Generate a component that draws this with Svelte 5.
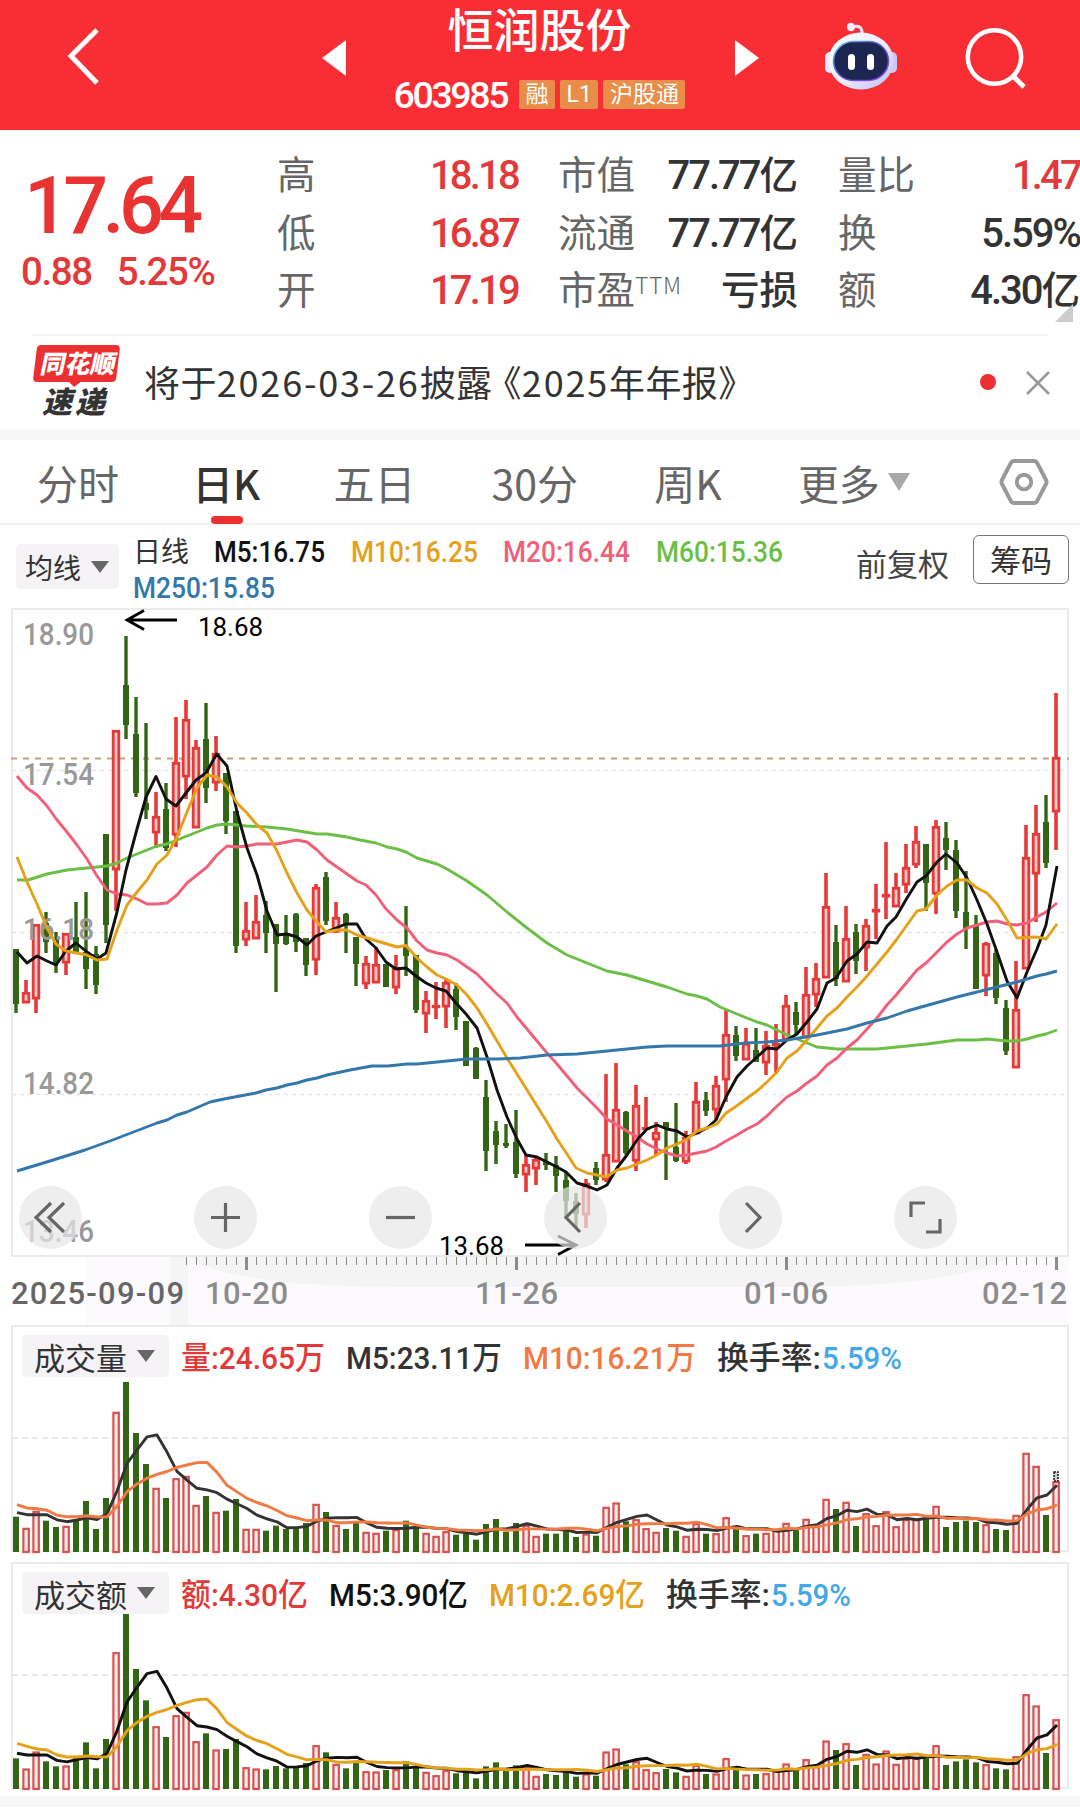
<script>
  const quoteCols = [
    [
      { label: '高', value: '18.18', tone: 'up' },
      { label: '低', value: '16.87', tone: 'up' },
      { label: '开', value: '17.19', tone: 'up' }
    ],
    [
      { label: '市值', value: '77.77', unit: '亿' },
      { label: '流通', value: '77.77', unit: '亿' },
      { label: '市盈', sup: 'TTM', unit: '亏损' }
    ],
    [
      { label: '量比', value: '1.47', tone: 'up' },
      { label: '换', value: '5.59%' },
      { label: '额', value: '4.30', unit: '亿' }
    ]
  ]

  const tabs = ['分时', '日K', '五日', '30分', '周K']
  const activeTab = '日K'

  const averages = [
    { text: 'M5:16.75', color: '#111111', width: 111 },
    { text: 'M10:16.25', color: '#e5a11a', width: 127 },
    { text: 'M20:16.44', color: '#f0607a', width: 127 },
    { text: 'M60:15.36', color: '#6bbf45', width: 127 },
    { text: 'M250:15.85', color: '#3478ab', width: 142 }
  ]

  const priceLabels = [
    { text: '18.90', y: 645 },
    { text: '17.54', y: 785 },
    { text: '16.18', y: 940 },
    { text: '14.82', y: 1094 },
    { text: '13.46', y: 1242 }
  ]

  const dates = [
    { text: '2025-09-09', x: 11, width: 173, color: '#666666' },
    { text: '10-20', x: 205, width: 83, color: '#8c8c8c' },
    { text: '11-26', x: 475, width: 83, color: '#8c8c8c' },
    { text: '01-06', x: 744, width: 84, color: '#8c8c8c' },
    { text: '02-12', x: 982, width: 85, color: '#8c8c8c' }
  ]

  const xAt = (i) => 16 + i * 10

  // direction, high, body top, body bottom, low
  const candles = `
g949,949,1004,1013 r980,992,1003,1003 r924,924,999,1013 g912,923,942,953 g932,940,963,973
r933,933,963,975 g902,937,952,952 g892,952,969,989 g946,954,985,994 g834,834,925,943
r730,730,870,911 g636,685,725,739 g697,734,793,797 g723,803,810,819 r792,816,833,848
g783,809,848,851 r717,762,835,847 r700,719,777,799 r740,747,828,828 g703,739,788,803
r736,753,783,791 g773,773,821,834 g811,811,946,953 r902,930,940,946 r895,921,939,939
g901,915,933,953 g924,924,944,992 g915,934,944,945 g913,914,942,952 g938,938,965,976
r884,887,960,975 g872,877,921,925 r902,917,932,933 g913,914,924,953 g937,937,964,986
r956,963,984,989 r947,964,983,983 g964,964,987,987 r955,967,988,994 g906,947,956,976
g955,955,1010,1013 r991,1000,1014,1033 r982,1005,1007,1019 r978,982,1007,1028 g983,989,1017,1030
g1021,1021,1066,1066 g1047,1048,1079,1079 g1080,1097,1151,1171 g1121,1131,1145,1164 g1124,1143,1146,1148
g1110,1142,1174,1178 r1155,1164,1175,1192 r1157,1159,1169,1185 g1153,1161,1165,1170 g1156,1165,1176,1192
g1172,1180,1201,1217 g1193,1201,1214,1228 r1179,1183,1215,1228 g1162,1168,1180,1185 r1074,1154,1180,1182
r1063,1109,1162,1162 g1111,1112,1153,1155 r1085,1105,1161,1171 r1097,1127,1129,1129 r1122,1132,1140,1156
g1122,1122,1129,1180 g1103,1147,1161,1162 r1131,1137,1162,1164 r1082,1101,1134,1134 g1092,1100,1111,1116
r1076,1085,1110,1120 r1010,1034,1080,1102 g1026,1035,1056,1061 r1028,1043,1060,1060 g1028,1050,1062,1062
r1031,1045,1063,1075 r1024,1043,1046,1074 r995,1005,1040,1040 g1002,1012,1025,1035 r967,994,1038,1038
r963,978,995,1007 r873,906,978,978 g925,942,979,986 r906,938,982,982 g924,932,961,974
r919,925,948,971 r884,909,912,939 r842,894,897,919 r873,887,907,907 r844,867,885,893
r826,841,865,868 g844,844,883,911 r820,826,894,914 g822,838,850,870 g840,850,911,918
g871,912,929,949 g915,926,989,989 r942,943,976,996 g949,953,998,1004 g1000,1008,1051,1055
r961,1009,1068,1068 r825,857,969,969 r805,833,874,922 g795,822,863,868 r693,757,812,850`
    .trim()
    .split(/\s+/)
    .map((row, i) => {
      const [high, top, bottom, low] = row.slice(1).split(',').map(Number)
      return { x: xAt(i), up: row[0] === 'r', high, top, bottom, low }
    })

  const priceLines = [
    {
      color: '#6bbf45',
      points:
        '17,880 28,880 47,874 67,870 87,868 107,866 117,863 127,858 157,846 167,844 187,836 207,828 217,825 227,824 247,826 267,827 287,829 317,834 327,834 347,837 360,840 376,843 387,847 397,849 406,852 417,858 427,861 437,864 447,869 467,881 487,895 507,912 527,928 547,943 567,955 587,963 607,971 627,975 647,981 667,987 687,994 697,996 707,999 720,1007 737,1014 757,1022 767,1025 787,1035 807,1043 817,1047 837,1049 877,1049 907,1046 917,1045 927,1044 957,1040 977,1040 987,1039 1007,1041 1017,1041 1027,1039 1037,1036 1046,1034 1057,1030'
    },
    {
      color: '#f0607a',
      points:
        '17,776 27,788 37,795 47,806 57,820 67,832 77,845 87,859 97,876 107,890 117,894 127,895 137,899 147,904 157,904 167,903 177,895 187,883 197,875 207,867 217,855 227,846 237,847 247,846 257,844 267,844 277,844 287,842 297,840 307,842 317,850 327,860 337,867 347,874 357,881 366,885 376,895 386,909 397,920 407,928 417,941 427,950 437,953 447,955 457,960 467,967 477,974 487,984 497,994 507,1003 517,1017 527,1029 537,1041 547,1053 557,1064 567,1076 577,1088 587,1098 597,1108 607,1119 617,1125 627,1131 637,1137 647,1144 657,1149 667,1153 677,1156 687,1155 697,1153 707,1151 716,1147 726,1141 737,1135 747,1129 757,1124 767,1116 777,1106 787,1097 797,1091 807,1083 817,1076 827,1065 837,1058 847,1048 857,1040 867,1029 877,1018 887,1005 897,994 907,982 917,970 926,963 937,952 947,942 957,934 967,928 977,925 987,922 997,921 1007,924 1017,925 1027,923 1037,917 1046,912 1057,903'
    },
    {
      color: '#111111',
      points:
        '17,952 27,963 37,956 47,961 56,965 66,951 76,943 87,952 97,959 106,953 117,912 126,870 137,829 146,797 156,776.5 166,799 176,806 186,793 196,780 206,773 216.7,754 227,766 237,812 247,848 257,875 267,911 277,935 287,934 297,937 307,945 316,936 326,932 336,928 346,924 357,924 366,939 376,948 386,962 396,969 406,968 416,976 426,983 436,988 446,991 456,1003 466,1014 477,1028 487,1057 497,1090 507,1117 517,1139 526,1155 537,1157 547,1162 557,1167 566,1172 577,1183 587,1186 597,1190 607,1185 617,1168 627,1155 637,1140 647,1129 657,1125 667,1129 677,1131 687,1137 697,1133 707,1128 716,1120 726,1097 737,1077 747,1066 757,1057 767,1048 777,1049 787,1040 797,1034 807,1022 817,1009 827,983 836,978 847,961 857,954 867,942 877,943 887,926 896,917 907,898 917,882 926,876 937,862 946,854 957,863 967,878 977,900 987,924 997,952 1007,981 1017,998 1027,972 1037,949 1046,925 1057,866'
    },
    {
      color: '#e5a11a',
      points:
        '17,857 27,882 37,904 47,928 56,944 66,951 76,953 87,955 97,960 107,959 117,930 127,905 137,892 147,880 157,864 167,855 177,837 187,812 197,788 207,775 217,777 227,787 237,803 247,813 257,825 267,833 277,851 287,873 297,893 307,910 317,922 326,932 337,930 347,930 357,935 367,938 377,941 387,944 397,947 406,945.5 417,958 427,967 437,975 446,979 457,985 467,995 477,1008 487,1024 497,1041 507,1058 517,1074 527,1090 537,1106 547,1122 557,1139 567,1154 576,1168 587,1173 597,1175 606,1177 617,1170 627,1168 637,1164 647,1160 657,1155 667,1148 677,1144 687,1139 697,1131 707,1128 717,1124 726,1113 735,1107 746,1099 757,1091 767,1082 777,1072 787,1058 797,1051 807,1040 817,1028 827,1016 837,1008 847,997 857,987 867,976 877,964 887,952 897,939 907,925 917,911 926,909 937,895 947,886 957,880 967,880 977,888 987,893 997,904 1007,920 1017,938 1027,937.5 1037,937 1046,939 1057,924'
    },
    {
      color: '#3478ab',
      points:
        '17,1171 50,1161 85,1150 110,1141 157,1123 167,1120 177,1115 187,1112 210,1102 224,1099 240,1096 256,1093 266,1090 277,1088 287,1085 297,1083 307,1080 317,1078 327,1075 350,1070 372,1066 388,1066 407,1064 417,1064 447,1061 467,1059 497,1059 520,1058 547,1055 577,1054 607,1051 647,1047 667,1046 720,1046 745,1043 767,1042 787,1040 817,1035 847,1029 867,1023 887,1018 907,1011 957,997 977,992 997,987 1017,982 1037,976 1046,974 1057,971'
    }
  ]

  // bar heights in thirds of a pixel
  const volume = [
    106, 71, 122, 94, 75, 77, 97, 153, 69, 162, 419, 510, 357, 264, 191, 162, 220, 227, 140, 168, 119, 124, 159, 68, 68,
    64, 79, 69, 71, 87, 143, 120, 80, 69, 92, 59, 56, 64, 67, 94, 75, 56, 47, 61, 52, 55, 37, 84, 99, 61, 87, 80, 47, 55,
    55, 75, 45, 54, 49, 134, 147, 92, 97, 70, 59, 72, 64, 47, 85, 55, 55, 103, 71, 49, 55, 56, 65, 86, 69, 98, 77, 158,
    129, 149, 78, 115, 79, 121, 76, 97, 97, 99, 137, 75, 90, 94, 90, 82, 69, 66, 110, 296, 257, 111, 211
  ]
  const amount = [
    92, 60, 111, 83, 68, 69, 97, 140, 62, 150, 409, 529, 360, 266, 187, 156, 220, 230, 142, 167, 117, 120, 150, 64, 60,
    59, 69, 62, 67, 78, 130, 110, 74, 62, 84, 52, 51, 57, 58, 83, 67, 50, 40, 56, 47, 52, 32, 68, 80, 55, 71, 64, 38, 45,
    42, 57, 37, 45, 40, 111, 120, 74, 82, 58, 49, 60, 50, 38, 71, 45, 45, 91, 60, 42, 45, 46, 55, 75, 57, 88, 67, 144,
    117, 136, 72, 104, 75, 114, 74, 92, 92, 92, 130, 72, 83, 89, 80, 73, 62, 59, 97, 283, 249, 108, 208
  ]

  function movingAverage(values, span, lead) {
    return values.map((_, i) => {
      if (i < span - 1) return lead[i]
      return values.slice(i - span + 1, i + 1).reduce((a, b) => a + b, 0) / span
    })
  }

  function toPoints(values) {
    return values.map((v, i) => `${xAt(i) + 1},${(226 - v / 3).toFixed(1)}`).join(' ')
  }

  const panels = [
    {
      name: '成交量',
      bars: volume,
      stats: [
        { text: '量:24.65万', color: '#e23a3a', width: 144 },
        { text: 'M5:23.11万', color: '#333333', width: 156 },
        { text: 'M10:16.21万', color: '#f07a42', width: 173 }
      ],
      slow: toPoints(movingAverage(volume, 10, [139, 129, 127, 122, 107, 103, 103, 106, 102])),
      fast: toPoints(movingAverage(volume, 5, [115, 109, 109, 109])),
      slowColor: '#f07a42',
      fastColor: '#333333',
      forecast: true
    },
    {
      name: '成交额',
      bars: amount,
      stats: [
        { text: '额:4.30亿', color: '#e23a3a', width: 127 },
        { text: 'M5:3.90亿', color: '#111111', width: 139 },
        { text: 'M10:2.69亿', color: '#e5a11a', width: 156 }
      ],
      slow: toPoints(movingAverage(amount, 10, [134, 125, 117, 114, 99, 93, 93, 96, 94])),
      fast: toPoints(movingAverage(amount, 5, [104, 99, 99, 99])),
      slowColor: '#e5a11a',
      fastColor: '#111111',
      forecast: false
    }
  ]

  const minorTicks = Array.from({ length: 88 }, (_, i) => 186 + i * 10)
  const majorTicks = [246, 516, 786, 1056]

  const controls = [
    'M45 17 30 31.5 45 46M32 17 17 31.5 32 46',
    'M17 31.5H46M31.5 17V46',
    'M17 31.5H46',
    'M36 17 22 31.5 36 46',
    'M27 17 41 31.5 27 46',
    'M17 31V17H31M46 33V46H32'
  ]
</script>

{#snippet fitted(text, color, width, size)}
  <svg class="fitted" {width} height="36">
    <text x="0" y="28" fill={color} font-size={size} textLength={width} lengthAdjust="spacingAndGlyphs">{text}</text>
  </svg>
{/snippet}

<div class="screen">
  <header class="topbar">
    <svg class="back" width="40" height="64" viewBox="0 0 40 64">
      <path d="M34 6 8 32 34 59" fill="none" stroke="#fff" stroke-width="5" />
    </svg>
    <svg class="prev" width="24" height="36" viewBox="0 0 24 36"><path d="M24 0V36L0 18Z" fill="#fff" /></svg>
    <div class="stock">
      <h1>恒润股份</h1>
      <div class="stock-meta">
        <span class="code">603985</span>
        <span class="tag">融</span>
        <span class="tag">L1</span>
        <span class="tag">沪股通</span>
      </div>
    </div>
    <svg class="next" width="24" height="36" viewBox="0 0 24 36"><path d="M0 0V36L24 18Z" fill="#fff" /></svg>
    <svg class="robot" width="72" height="68" viewBox="0 0 72 68">
      <defs>
        <linearGradient id="shell" x1="0" y1="0" x2="1" y2="1">
          <stop offset="0" stop-color="#ffffff" />
          <stop offset="0.55" stop-color="#efeaff" />
          <stop offset="1" stop-color="#b9bdf0" />
        </linearGradient>
        <linearGradient id="rim" x1="0" y1="0" x2="1" y2="1">
          <stop offset="0" stop-color="#5fd8f0" />
          <stop offset="0.5" stop-color="#4a4fd0" />
          <stop offset="1" stop-color="#a04be8" />
        </linearGradient>
      </defs>
      <path d="M27 5Q38 2 37 13" fill="none" stroke="#f1e9fb" stroke-width="3" />
      <circle cx="26" cy="5" r="4.2" fill="#f4eefc" />
      <rect x="0" y="30" width="11" height="21" rx="5" fill="#ece8fb" />
      <rect x="61" y="30" width="11" height="21" rx="5" fill="#c9c8f4" />
      <ellipse cx="36" cy="39" rx="32.5" ry="28.5" fill="url(#shell)" />
      <rect x="8.5" y="19.5" width="55" height="39" rx="20" fill="#1c2650" stroke="url(#rim)" stroke-width="1.6" />
      <rect x="23" y="32" width="7" height="16" rx="3.5" fill="#fff" />
      <rect x="42" y="32" width="7" height="16" rx="3.5" fill="#fff" />
    </svg>
    <svg class="search" width="64" height="64" viewBox="0 0 64 64">
      <circle cx="31.5" cy="31" r="26.7" fill="none" stroke="#fff" stroke-width="4.5" />
      <path d="M49 49 61 61" stroke="#fff" stroke-width="5" />
    </svg>
  </header>

  <section class="quote">
    <div class="last">
      <div class="price">17.64</div>
      <div class="change"><span>0.88</span><span>5.25%</span></div>
    </div>
    {#each quoteCols as col}
      <dl class="col">
        {#each col as item}
          <div class="pair">
            <dt>{item.label}{#if item.sup}<sup>{item.sup}</sup>{/if}</dt>
            <dd class={item.tone}>
              {#if item.value}<span class="num">{item.value}</span>{/if}{#if item.unit}<span>{item.unit}</span>{/if}
            </dd>
          </div>
        {/each}
      </dl>
    {/each}
    <i class="corner"></i>
  </section>

  <section class="news">
    <div class="badge">
      <span class="badge-top"><b>同花顺</b></span>
      <span class="badge-bottom">速递</span>
    </div>
    <p>将于<span class="digits">2026-03-26</span>披露<span class="bracket">《</span><span class="digits">2025</span>年年报》</p>
    <i class="dot"></i>
    <svg width="24" height="24" viewBox="0 0 24 24">
      <path d="M1 1 23 23M23 1 1 23" stroke="#999" stroke-width="2.6" />
    </svg>
  </section>

  <nav class="tabs">
    {#each tabs as tab}
      <span class="tab" class:active={tab === activeTab}>{tab}</span>
    {/each}
    <span class="tab more">更多<i class="caret"></i></span>
    <svg class="settings" width="50" height="48" viewBox="0 0 50 48">
      <path
        d="M14.5 3H35.5Q37 3 38 4.7L47 22Q48 24 47 26L38 43.3Q37 45 35.5 45H14.5Q13 45 12 43.3L3 26Q2 24 3 22L12 4.7Q13 3 14.5 3Z"
        fill="none"
        stroke="#999"
        stroke-width="4"
      />
      <circle cx="25" cy="24" r="7.2" fill="none" stroke="#999" stroke-width="4" />
    </svg>
  </nav>

  <section class="legend">
    <span class="picker">均线<i class="caret"></i></span>
    <div class="averages">
      <span class="period">日线</span>
      {#each averages as avg}
        {@render fitted(avg.text, avg.color, avg.width, 29.5)}
      {/each}
    </div>
    <span class="adjust">前复权</span>
    <span class="chips">筹码</span>
  </section>

  <section class="kline">
    <svg class="chart" width="1080" height="649" viewBox="0 608 1080 649">
      <rect x="12" y="609" width="1056" height="647" fill="none" stroke="#ebebeb" stroke-width="2" />
      {#each [770.5, 932.5, 1094.5] as y}
        <line x1="12" x2="1068" y1={y} y2={y} stroke="#e6e6e6" stroke-width="1.5" stroke-dasharray="4 4" />
      {/each}
      <line x1="11" x2="1069" y1="758.5" y2="758.5" stroke="#bda677" stroke-width="2" stroke-dasharray="6 6" />

      {#each candles as c}
        {#if c.up}
          <path d="M{c.x} {c.high}V{c.top}M{c.x} {c.bottom}V{c.low}" stroke="#e53a38" stroke-width="3.6" />
          <rect
            x={c.x - 2.8}
            y={c.top + 1.3}
            width="5.6"
            height={Math.max(c.bottom - c.top - 2.2, 0.5)}
            fill="#f7c9c9"
            stroke="#e53a38"
            stroke-width="2.8"
          />
        {:else}
          <line x1={c.x} x2={c.x} y1={c.high} y2={c.low} stroke="#336614" stroke-width="3.4" />
          <rect x={c.x - 3} y={c.top} width="6" height={c.bottom - c.top} fill="#336614" />
        {/if}
      {/each}

      {#each priceLabels as label}
        <text x="23" y={label.y} class="axis" textLength="71" lengthAdjust="spacingAndGlyphs">{label.text}</text>
      {/each}

      {#each priceLines as line}
        <polyline points={line.points} fill="none" stroke={line.color} stroke-width="2.9" stroke-linejoin="round" />
      {/each}

      <path d="M177 620H128M144 610.5 127 620 144 629.5" fill="none" stroke="#000" stroke-width="2.8" />
      <text x="198" y="636" class="mark" textLength="65" lengthAdjust="spacingAndGlyphs">18.68</text>
      <path d="M525 1245H575M558 1236 576 1245 558 1254.5" fill="none" stroke="#000" stroke-width="2.8" />
      <text x="439" y="1255" class="mark" textLength="65" lengthAdjust="spacingAndGlyphs">13.68</text>
    </svg>
    <div class="controls">
      {#each controls as d}
        <span class="control">
          <svg width="63" height="63" viewBox="0 0 63 63"><path {d} fill="none" stroke="#666" stroke-width="3.2" /></svg>
        </span>
      {/each}
    </div>
  </section>

  <svg class="timeline" width="1080" height="68" viewBox="0 1257 1080 68">
    <rect x="86" y="1257" width="983" height="70" fill="#fdfafd" />
    <path d="M188 1257H1010Q960 1287 780 1287H400Q230 1287 188 1257Z" fill="#f5f4f5" />
    <rect x="170" y="1257" width="18" height="70" fill="#f5f5f6" />
    {#each minorTicks as x}
      <line x1={x + 0.5} x2={x + 0.5} y1="1257" y2="1265" stroke="#8c8c8c" stroke-width="1" />
    {/each}
    {#each majorTicks as x}
      <line x1={x + 0.5} x2={x + 0.5} y1="1257" y2="1270" stroke="#8c8c8c" stroke-width="3" />
    {/each}
    {#each dates as date}
      <text x={date.x} y="1304" class="date" fill={date.color} textLength={date.width}>{date.text}</text>
    {/each}
  </svg>

  {#each panels as panel}
    <section class="panel">
      <svg class="chart" width="1080" height="228" viewBox="0 0 1080 228">
        <rect x="12" y="1" width="1056" height="225" fill="none" stroke="#ebebeb" stroke-width="2" />
        <line x1="12" x2="1068" y1="113" y2="113" stroke="#e2e2e2" stroke-width="1.5" stroke-dasharray="6 4" />
        {#each panel.bars as v, i}
          {#if candles[i].up}
            <rect
              x={xAt(i) - 2.6}
              y={227.5 - v / 3}
              width="5.4"
              height={v / 3 - 0.5}
              fill="#fdecec"
              stroke="#d9514f"
              stroke-width="2.2"
            />
          {:else}
            <rect x={xAt(i) - 3} y={227 - v / 3} width="6" height={v / 3} fill="#336614" />
          {/if}
        {/each}
        {#if panel.forecast}
          <rect x="1054" y="147" width="4" height="9" fill="#ccc" stroke="#222" stroke-width="1.6" stroke-dasharray="2 1" />
        {/if}
        <polyline points={panel.fast} fill="none" stroke={panel.fastColor} stroke-width="2.9" stroke-linejoin="round" />
        <polyline points={panel.slow} fill="none" stroke={panel.slowColor} stroke-width="2.9" stroke-linejoin="round" />
      </svg>
      <div class="panel-head">
        <span class="picker">{panel.name}<i class="caret"></i></span>
        {#each panel.stats as stat}
          {@render fitted(stat.text, stat.color, stat.width, 32)}
        {/each}
        <span class="turnover">
          {@render fitted('换手率:', '#333333', 104, 32)}
          {@render fitted('5.59%', '#45a8e6', 80, 32)}
        </span>
      </div>
    </section>
  {/each}

  <div class="strip"></div>
</div>

<style>
  :global(body) {
    margin: 0;
    background: #fff;
  }

  .screen {
    width: 1080px;
    height: 1812px;
    overflow: hidden;
    background: #fff;
    color: #333;
    font-family: Roboto, 'Noto Sans CJK SC', sans-serif;
  }

  svg {
    display: block;
    flex: none;
  }

  .topbar {
    display: grid;
    grid-template-columns: 60px 262px 413px 90px 138px 117px;
    height: 130px;
    background: #f92e34;
    color: #fff;
  }

  .back {
    grid-column: 2;
    grid-row: 1;
    margin: 24px 0 0 3px;
  }

  .prev {
    grid-column: 3;
    grid-row: 1;
    margin-top: 40px;
  }

  .stock {
    grid-column: 3;
    grid-row: 1;
    display: flex;
    flex-direction: column;
    align-items: center;
    padding-left: 22px;
  }

  h1 {
    margin: 1px 0 0;
    font-size: 46px;
    font-weight: 500;
    line-height: 60px;
  }

  .stock-meta {
    display: flex;
    align-items: center;
    gap: 5px;
    margin-top: 16px;
    height: 35px;
  }

  .code {
    margin-right: 7px;
    font-size: 37.5px;
    font-weight: 500;
    letter-spacing: -2.4px;
  }

  .tag {
    padding: 0 6.5px;
    border-radius: 2px;
    background: #e88d4a;
    font-size: 23px;
    line-height: 29px;
  }

  .next {
    grid-column: 4;
    grid-row: 1;
    margin-top: 40px;
  }

  .robot {
    grid-column: 5;
    grid-row: 1;
    margin-top: 22px;
  }

  .search {
    grid-column: 6;
    grid-row: 1;
    margin-top: 26px;
  }

  .quote {
    position: relative;
    display: grid;
    grid-template-columns: 237px 241px 240px 242px;
    column-gap: 40px;
    height: 204px;
  }

  .last {
    color: #e93232;
    font-weight: 500;
  }

  .price {
    margin: 35px 0 0 24px;
    font-size: 79px;
    line-height: 82px;
    letter-spacing: -5.6px;
  }

  .change {
    display: flex;
    gap: 25px;
    margin: 3px 0 0 21px;
    color: #e23a3a;
    font-size: 38.5px;
    line-height: 44px;
    letter-spacing: -1.4px;
  }

  .col {
    margin: 17px 0 0;
  }

  .pair {
    display: flex;
    justify-content: space-between;
    height: 57.5px;
    line-height: 57px;
    font-size: 38.5px;
  }

  dt {
    color: #666;
    white-space: nowrap;
  }

  sup {
    font-family: 'Noto Sans CJK SC', sans-serif;
    font-size: 23px;
    font-weight: 300;
    line-height: 0;
    letter-spacing: 0.5px;
    vertical-align: 10px;
  }

  dd {
    margin: 0;
    white-space: nowrap;
    font-weight: 500;
  }

  dd .num {
    font-size: 40px;
    letter-spacing: -2px;
  }

  dd.up {
    color: #e23a3a;
  }

  dd.up .num {
    letter-spacing: -2.8px;
  }

  .corner {
    position: absolute;
    right: 7px;
    bottom: 12px;
    border-bottom: 18px solid #ccc;
    border-left: 18px solid transparent;
  }

  .news {
    display: flex;
    align-items: center;
    margin: 0 32px;
    height: 93px;
    border-top: 2px solid #f3f3f3;
  }

  .badge {
    width: 89px;
    height: 75px;
    font-style: italic;
    font-weight: 900;
  }

  .badge-top {
    position: relative;
    display: block;
    margin: 0 3px;
    height: 37px;
    border-radius: 4px;
    background: #ec2f31;
    color: #fff;
    font-size: 25px;
    line-height: 39px;
    text-align: center;
    transform: skewX(-7deg);
  }

  .badge-top b {
    display: inline-block;
    transform: skewX(9deg);
  }

  .badge-top::after {
    content: '';
    position: absolute;
    left: 35px;
    top: 36px;
    border: 7px solid transparent;
    border-top: 6px solid #ec2f31;
  }

  .badge-bottom {
    display: block;
    padding-left: 10px;
    font-size: 30px;
    line-height: 42px;
    letter-spacing: 3px;
  }

  .news p {
    flex: 1;
    margin: -4px 0 0 23px;
    font-family: 'Noto Sans CJK SC', sans-serif;
    font-size: 36px;
    letter-spacing: 0.4px;
    white-space: nowrap;
  }

  .digits {
    letter-spacing: 1.8px;
  }

  .bracket {
    margin-left: 11px;
    font-feature-settings: 'halt';
  }

  .dot {
    width: 16px;
    height: 16px;
    margin: -2px 30px 0 0;
    border-radius: 50%;
    background: #ec2f31;
  }

  .news svg {
    margin-right: -2px;
  }

  .tabs {
    display: flex;
    align-items: center;
    height: 83px;
    border-top: 11px solid #f7f7f7;
    border-bottom: 2px solid #f1f1f1;
    padding: 0 31px 0 37px;
    justify-content: space-between;
    font-family: 'Noto Sans CJK SC', sans-serif;
    font-size: 41px;
    color: #666;
  }

  .tab {
    position: relative;
  }

  .tab.active {
    margin: 0 -3px 0 -3px;
    color: #333;
    font-weight: 500;
  }

  .tab.active::after {
    content: '';
    position: absolute;
    left: 50%;
    bottom: -12px;
    width: 32px;
    height: 8px;
    margin-left: -15px;
    border-radius: 4px;
    background: #ec2f31;
  }

  .caret {
    display: inline-block;
    border: 9px solid transparent;
    border-top: 12px solid #666;
    border-bottom: 0;
  }

  .more {
    display: flex;
    align-items: center;
    gap: 8px;
    margin-right: 13px;
  }

  .more .caret {
    border-width: 18px 11px 0;
    border-top-color: #aaa8ab;
  }

  .legend {
    display: flex;
    height: 83px;
  }

  .picker {
    display: flex;
    align-items: center;
    gap: 10px;
    background: #f6f3f7;
    border-radius: 5px;
  }

  .legend .picker {
    box-sizing: border-box;
    width: 103px;
    height: 45px;
    margin: 19px 0 0 16px;
    padding-left: 9px;
    font-size: 28px;
  }

  .averages {
    display: flex;
    flex-wrap: wrap;
    align-content: flex-start;
    column-gap: 25.4px;
    width: 690px;
    margin: 9px 0 0 14px;
  }

  .period {
    height: 36px;
    font-size: 28px;
    line-height: 37px;
  }

  .fitted {
    overflow: visible;
    font-weight: 500;
  }

  .adjust {
    margin: 18px 0 0 33px;
    font-size: 31px;
    line-height: 45px;
    color: #444;
  }

  .chips {
    box-sizing: border-box;
    width: 96px;
    height: 49px;
    margin: 10px 0 0 24px;
    border: 1.5px solid #777;
    border-radius: 6px;
    font-size: 31px;
    line-height: 52px;
    text-align: center;
  }

  .kline {
    position: relative;
  }

  .chart {
    overflow: visible;
  }

  .axis {
    fill: #999;
    font-size: 31px;
    font-weight: 500;
  }

  .mark {
    font-size: 26px;
  }

  .date {
    font-size: 31px;
    font-weight: 500;
  }

  .controls {
    position: absolute;
    left: 19px;
    top: 578px;
    display: flex;
    gap: 112px;
  }

  .control {
    width: 63px;
    height: 63px;
    border-radius: 50%;
    background: rgba(231, 231, 231, 0.7);
  }

  .panel {
    position: relative;
    margin-bottom: 9px;
  }

  .panel-head {
    position: absolute;
    left: 22px;
    top: 10px;
    display: flex;
    align-items: center;
    gap: 21px;
  }

  .panel-head .fitted {
    margin-top: 5px;
  }

  .panel-head .picker {
    box-sizing: border-box;
    width: 147px;
    height: 42px;
    margin-right: -9px;
    padding-left: 12px;
    font-size: 31px;
  }

  .turnover {
    display: flex;
    gap: 1px;
  }

  .strip {
    height: 11px;
    margin-top: -3px;
    background: #f7f7f7;
  }
</style>
